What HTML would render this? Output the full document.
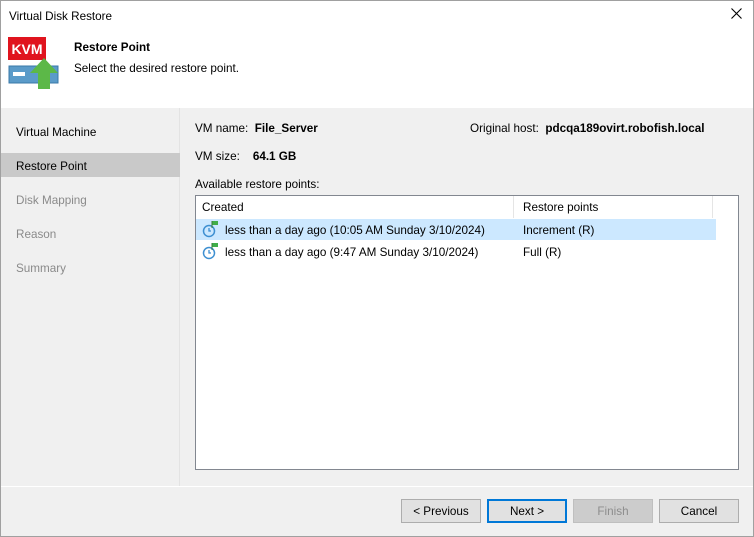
<!DOCTYPE html>
<html><head><style>
*{margin:0;padding:0;box-sizing:border-box}
body{width:754px;height:537px;overflow:hidden;font-family:"Liberation Sans",sans-serif;font-size:11.7px;line-height:15.5px;color:#000;position:relative;background:#f0f0f0}
.win{position:absolute;left:0;top:0;width:754px;height:537px;border:1px solid #a0a0a0}
.a{position:absolute;white-space:nowrap}
.btn{position:absolute;top:499px;width:80px;height:24px;border:1px solid #adadad;background:#e1e1e1;text-align:center;line-height:23px}
</style></head><body>
<div class="win"></div>
<div class="a" style="left:1px;top:1px;width:752px;height:107px;background:#fff"></div>
<div class="a" style="left:9px;top:9px">Virtual Disk Restore</div>
<svg class="a" style="left:731px;top:8px" width="11" height="11"><path d="M0.5 0.5 L10.5 10.5 M10.5 0.5 L0.5 10.5" stroke="#000" stroke-width="1.1"/></svg>
<svg class="a" style="left:8px;top:37px" width="52" height="54">
<rect x="0" y="0" width="38" height="23" fill="#e0141e"/>
<text x="19" y="17" font-family="Liberation Sans" font-weight="bold" font-size="14" fill="#fff" text-anchor="middle">KVM</text>
<rect x="1" y="29" width="49" height="17" fill="#5b9bc9" stroke="#3a78a8"/>
<rect x="5" y="35" width="12" height="4" fill="#fff"/>
<path d="M36 21 L50 36 L42 36 L42 52 L30 52 L30 36 L22 36 Z" fill="#5cb848"/>
</svg>
<div class="a" style="left:74px;top:40px;font-weight:bold">Restore Point</div>
<div class="a" style="left:74px;top:61px">Select the desired restore point.</div>
<div class="a" style="left:1px;top:108px;width:179px;height:378px;background:#f0f0f0;border-right:1px solid #e3e3e3"></div>
<div class="a" style="left:1px;top:153px;width:179px;height:24px;background:#c9c9c9"></div>
<div class="a" style="left:16px;top:125px">Virtual Machine</div>
<div class="a" style="left:16px;top:159px">Restore Point</div>
<div class="a" style="left:16px;top:193px;color:#8a8a8a">Disk Mapping</div>
<div class="a" style="left:16px;top:227px;color:#8a8a8a">Reason</div>
<div class="a" style="left:16px;top:261px;color:#8a8a8a">Summary</div>
<div class="a" style="left:195px;top:121px">VM name:&nbsp; <b>File_Server</b></div>
<div class="a" style="left:470px;top:121px">Original host:&nbsp; <b>pdcqa189ovirt.robofish.local</b></div>
<div class="a" style="left:195px;top:149px">VM size:&nbsp;&nbsp;&nbsp; <b>64.1 GB</b></div>
<div class="a" style="left:195px;top:177px">Available restore points:</div>
<div class="a" style="left:195px;top:195px;width:544px;height:275px;background:#fff;border:1px solid #828790"></div>
<div class="a" style="left:513px;top:196px;width:1px;height:22px;background:#e5e5e5"></div>
<div class="a" style="left:712px;top:196px;width:1px;height:22px;background:#e5e5e5"></div>
<div class="a" style="left:202px;top:200px">Created</div>
<div class="a" style="left:523px;top:200px">Restore points</div>
<div class="a" style="left:196px;top:219px;width:520px;height:21px;background:#cce8ff"></div>
<svg class="a" style="left:202px;top:220px" width="18" height="18"><circle cx="7" cy="11" r="5.5" fill="none" stroke="#3d8fd1" stroke-width="1.5"/><path d="M7 8 V11 H9" stroke="#3d8fd1" fill="none" stroke-width="1.3"/><path d="M10 1 V8" stroke="#3a7a3a"/><path d="M10.5 1 H16 V5 H10.5Z" fill="#3fae49"/></svg>
<svg class="a" style="left:202px;top:242px" width="18" height="18"><circle cx="7" cy="11" r="5.5" fill="none" stroke="#3d8fd1" stroke-width="1.5"/><path d="M7 8 V11 H9" stroke="#3d8fd1" fill="none" stroke-width="1.3"/><path d="M10 1 V8" stroke="#3a7a3a"/><path d="M10.5 1 H16 V5 H10.5Z" fill="#3fae49"/></svg>
<div class="a" style="left:225px;top:223px">less than a day ago (10:05 AM Sunday 3/10/2024)</div>
<div class="a" style="left:523px;top:223px">Increment (R)</div>
<div class="a" style="left:225px;top:245px">less than a day ago (9:47 AM Sunday 3/10/2024)</div>
<div class="a" style="left:523px;top:245px">Full (R)</div>
<div class="a" style="left:1px;top:486px;width:752px;height:1px;background:#fff"></div>
<div class="btn" style="left:401px">&lt; Previous</div>
<div class="btn" style="left:487px;border:2px solid #0078d7;line-height:21px">Next &gt;</div>
<div class="btn" style="left:573px;background:#cccccc;border-color:#bfbfbf;color:#8d8d8d">Finish</div>
<div class="btn" style="left:659px">Cancel</div>
</body></html>
